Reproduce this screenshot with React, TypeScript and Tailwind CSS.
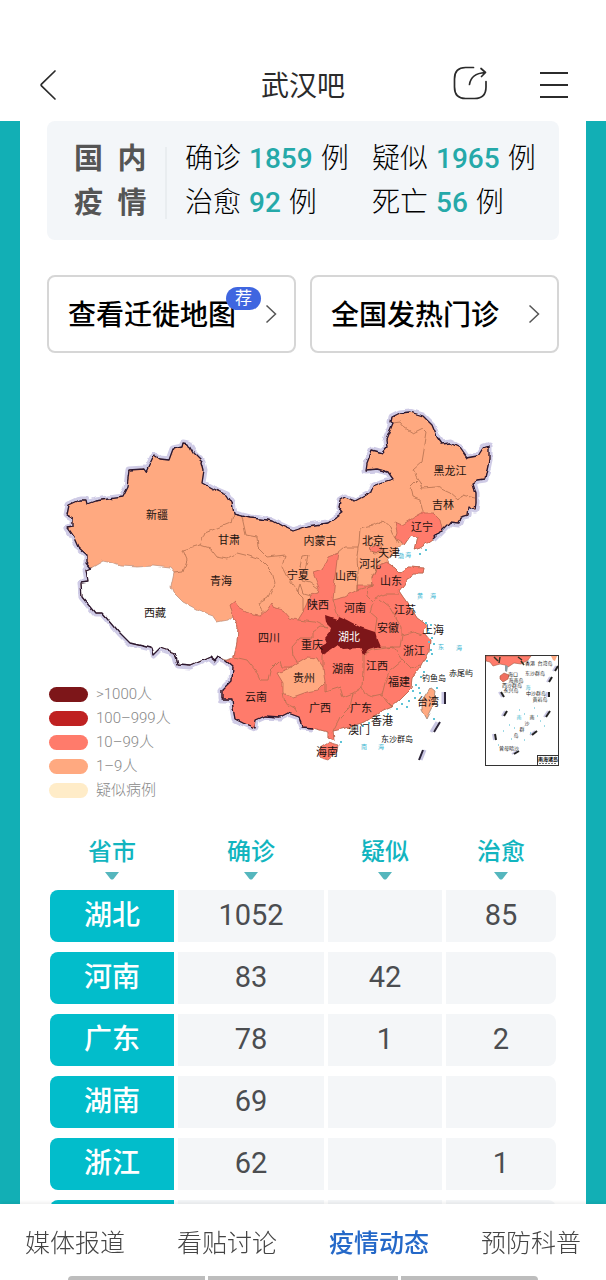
const CASES = [
  { label: '确诊', value: '1859' },
  { label: '疑似', value: '1965' },
  { label: '治愈', value: '92' },
  { label: '死亡', value: '56' },
];

const LEGEND = [
  { label: '>1000人', color: 'bg-[#7d1619]' },
  { label: '100–999人', color: 'bg-[#bf2121]' },
  { label: '10–99人', color: 'bg-[#ff7b6b]' },
  { label: '1–9人', color: 'bg-[#ffa980]' },
  { label: '疑似病例', color: 'bg-[#ffecc8]' },
];

const COLUMNS = ['省市', '确诊', '疑似', '治愈'];

const ROWS = [
  ['湖北', '1052', '', '85'],
  ['河南', '83', '42', ''],
  ['广东', '78', '1', '2'],
  ['湖南', '69', '', ''],
  ['浙江', '62', '', '1'],
  ['', '', '', ''],
];

const TABS = ['媒体报道', '看贴讨论', '疫情动态', '预防科普'];

// Land border, clockwise from the south-west corner of Xinjiang to the Yalu
const NORTH_BORDER =
  'M91 568 87 563 87 555 78 547 74 538 67 528 73 527 73 518 67 515 69 505 80 500 86 500 87 504 95 501 122 497 127 487 129 470 144 469 146 472 154 455 160 459 169 460 173 449 182 447 183 443 188 444 193 453 202 462 204 470 202 483 213 489 227 495 232 503 234 514 250 518 260 519 273 521 282 526 293 531 308 526 328 523 335 518 343 512 339 507 340 500 345 497 355 501 370 493 373 486 383 482 393 479 388 472 377 469 366 470 367 463 372 450 383 453 387 448 386 440 393 423 391 422 392 417 400 413 410 412 423 416 432 425 437 437 442 444 450 443 460 448 467 458 478 456 483 448 489 446 489 460 485 479 478 480 473 483 476 493 476 503 475 510 469 507 468 515 461 517 459 523 450 522 443 529 433 539';

const COAST =
  '420 548 414 550 417 537 412 535 405 545 398 547 395 553 387 560 390 565 395 568 400 573 408 567 424 568 423 573 413 573 405 583 399 591 403 597 411 608 417 618 427 625 423 632 430 640 429 652 424 660 420 668 413 677 412 688 400 700 392 707 380 712 365 722 358 724 350 727 333 731 334 740 328 738 328 732 313 728';

const SOUTH_BORDER =
  '313 728 302 727 299 717 288 713 280 717 265 716 256 720 255 728 243 723 235 719 233 708 232 699 222 699 222 690 232 680 233 667 225 660 218 657 215 661 210 657 190 666 178 665 175 653 160 648 153 655 151 648 130 643 120 633 103 613 95 613 82 597 81 583 88 582 86 570 91 568';

const TIBET =
  'M91 568 103 561 112 563 120 566 137 567 153 566 170 568 174 573 171 587 173 592 183 602 198 610 212 615 217 622 228 620 233 616 238 627 237 643 234 657 226 659 218 657 215 661 210 657 190 666 178 665 175 653 160 648 153 655 151 648 130 643 120 633 103 613 95 613 82 597 81 583 88 582 86 570Z';

const RED_SOUTH =
  'M233 616 230 605 235 601 239 607 253 615 260 616 267 610 272 603 275 608 283 610 290 618 298 620 303 612 307 603 310 595 318 593 319 588 313 573 322 570 328 557 338 553 337 560 335 577 333 600 345 597 357 590 357 585 373 585 372 577 377 567 387 563 395 568 400 573 408 567 424 568 423 573 413 573 405 583 399 591 403 597 411 608 417 618 427 625 423 632 430 640 429 652 424 660 420 668 413 677 412 688 400 700 392 707 380 712 365 722 358 724 350 727 333 731 334 740 328 738 328 732 313 728 302 727 299 717 288 713 280 717 265 716 256 720 255 728 243 723 235 719 233 708 232 699 222 699 222 690 232 680 233 667 225 660 234 657 237 643 238 627Z';

const LIAONING =
  'M395 522 402 525 413 518 422 513 433 513 440 520 442 529 433 539 420 548 414 550 417 537 412 535 405 545 395 538 397 532Z';

const GUIZHOU =
  'M277 673 290 668 297 663 307 657 317 658 323 667 325 683 318 690 307 692 293 697 283 693 283 683 280 678Z';

const HUBEI =
  'M325 616 337 620 338 616 347 620 360 627 375 632 377 640 380 647 370 650 363 655 360 648 343 649 337 645 323 655 318 648 327 643 325 638 330 632 331 627 326 622Z';

const HAINAN = 'M320 747 328 742 338 745 337 752 328 760 318 757Z';
const TAIWAN = 'M430 688 435 692 433 707 427 719 422 710 422 700Z';

const PROVINCE_LINES = [
  'M234 514 232 522 217 528 205 533 200 545 183 550 187 560 183 572 174 573',
  'M200 545 210 548 217 557 228 559 237 553 245 555 260 560 272 572 275 583 268 597 258 603 263 612',
  'M242 517 246 535 257 537 258 547 268 557 285 555 282 567 287 577 298 592 300 584 303 593 310 595',
  'M300 567 302 557 308 556 306 565 302 580 310 582 318 588',
  'M298 592 303 597 303 612',
  'M338 553 345 547 358 547 357 557 358 573 357 590',
  'M359 543 360 528 373 525 383 521 390 527 392 533 398 543',
  'M358 547 359 543',
  'M377 567 372 577 373 585',
  'M366 545 370 537 378 540 382 552 374 553 370 549Z',
  'M393 423 400 422 405 428 413 433 423 428 427 432 424 450 422 462 413 470 417 478 420 482 422 488 437 487 450 493 458 500 462 495 475 498',
  'M417 480 410 487 412 497 420 500 423 512',
  'M234 657 247 660 255 670 260 680 268 680 270 670 280 660 282 667 292 667',
  'M283 693 285 703 293 707 297 713',
  'M298 620 315 622 327 628 320 627 313 632 313 638 300 638 292 647 293 657 297 663',
  'M325 683 325 692 340 687 343 697 353 693 362 687 363 670 363 655',
  'M363 655 373 650 393 647 402 660 390 670 385 683 382 695 373 697 365 693 362 687',
  'M382 695 387 702 392 707',
  'M380 647 393 647 400 647 402 635 413 632 422 635',
  'M402 660 410 668 420 665',
  'M357 590 367 587 368 597 373 602 370 612 377 618 375 632',
  'M373 585 367 587 M373 600 385 594 399 594',
  'M380 600 390 608 397 620 402 628 402 635',
  'M333 600 338 616',
  'M353 693 350 707 340 717 333 731',
  'M323 655 323 667',
];

const PLACES: [string, number, number][] = [
  ['新疆', 157, 515],
  ['甘肃', 229, 540],
  ['青海', 221, 581],
  ['西藏', 155, 613],
  ['内蒙古', 320, 541],
  ['宁夏', 298, 575],
  ['黑龙江', 450, 471],
  ['吉林', 443, 505],
  ['辽宁', 422, 527],
  ['北京', 373, 541],
  ['天津', 389, 553],
  ['河北', 370, 564],
  ['山西', 346, 576],
  ['山东', 391, 581],
  ['陕西', 318, 605],
  ['河南', 355, 608],
  ['江苏', 405, 610],
  ['安徽', 388, 628],
  ['上海', 433, 630],
  ['四川', 269, 638],
  ['重庆', 312, 645],
  ['浙江', 414, 651],
  ['湖南', 343, 669],
  ['江西', 377, 666],
  ['福建', 399, 682],
  ['贵州', 304, 678],
  ['云南', 256, 697],
  ['广西', 320, 708],
  ['广东', 361, 708],
  ['香港', 382, 721],
  ['澳门', 359, 730],
  ['海南', 327, 752],
  ['台湾', 428, 702],
];

const ISLANDS: [string, number, number][] = [
  ['钓鱼岛', 434, 678],
  ['赤尾屿', 461, 673],
  ['东沙群岛', 397, 739],
];

const SEAS: [string, number, number][] = [
  ['渤', 401, 556],
  ['海', 408, 555],
  ['黄', 420, 596],
  ['海', 433, 596],
  ['东', 441, 647],
  ['海', 459, 648],
  ['南', 364, 747],
  ['海', 381, 747],
];

const SEA_DOTS: [number, number][] = [
  [419, 553], [425, 549], [430, 624], [428, 632], [431, 637], [433, 643], [430, 649], [426, 660], [423, 671],
  [420, 676], [415, 684], [419, 692], [414, 697], [408, 700], [401, 703], [396, 708], [362, 725], [368, 722],
  [374, 718], [387, 713], [340, 741], [436, 687], [433, 718], [427, 629], [425, 622], [428, 641], [431, 653],
  [412, 690], [406, 706], [418, 687],
];

const INSET_LABELS: [string, number, number][] = [
  ['香港', 530, 663],
  ['台湾岛', 545, 663],
  ['东沙群岛', 535, 673],
  ['海口', 513, 674],
  ['海南岛', 516, 680],
  ['西沙群岛', 512, 685],
  ['永兴岛', 511, 690],
  ['中沙群岛', 536, 693],
  ['黄岩岛', 540, 699],
  ['南', 532, 717],
  ['沙', 527, 723],
  ['群', 522, 729],
  ['岛', 516, 735],
  ['曾母暗沙', 509, 748],
];

// Nine-dash segments inside the inset: x1, y1, x2, y2
const INSET_DASHES: [number, number, number, number][] = [
  [558, 666, 555, 671],
  [552, 677, 549, 682],
  [549, 692, 549, 697],
  [550, 711, 546, 717],
  [537, 731, 532, 735],
  [514, 754, 519, 751],
  [495, 734, 496, 740],
  [507, 711, 504, 716],
  [501, 692, 504, 697],
];

function InsetMap() {
  return (
    <g>
      <rect x="485.500" y="655.500" width="73" height="110" fill="#fff" stroke="#333" />
      <path d="M486 656H531L528 660 521 664 514 663 508 667 505 665 500 664 493 666 490 662 486 661Z" fill="#ff7b6b" stroke="#a5593f" strokeWidth="0.6" />
      <path d="M551 656H557L555 661 553 660Z" fill="#ffa980" />
      <path d="M505 665 508 666 507 672 505 671Z" fill="#8a9da3" />
      <path d="M500 676 504 673 509 675 508 679 503 682 500 679Z" fill="#f0705f" stroke="#a5593f" strokeWidth="0.6" />
      <path d="M494 657 498 661M500 657 499 663M521 661 524 665M518 657 522 660" stroke="#332" strokeWidth="1.500" />
      {INSET_DASHES.map(([x1, y1, x2, y2]) => (
        <g key={`${x1}-${y1}`} strokeWidth="2">
          <path d={`M${x1 - 2} ${y1}L${x2 - 2} ${y2}`} stroke="#c9c6e2" />
          <path d={`M${x1} ${y1}L${x2} ${y2}`} stroke="#222" />
        </g>
      ))}
      <g fontSize="5" fill="#222" textAnchor="middle">
        {INSET_LABELS.map(([name, x, y]) => (
          <text key={name + y} x={x} y={y + 2}>
            {name}
          </text>
        ))}
        <text x="519" y="719" fill="#3cb4cc">南</text>
        <text x="528" y="689" fill="#3cb4cc">海</text>
      </g>
      <path
        d="M509 725h1M514 728h1M519 710h1M524 714h1M537 716h1M540 721h1M544 726h1M530 733h1M503 731h1M511 739h1M524 740h1M534 708h1M498 745h1"
        stroke="#3cb4cc"
      />
      <rect x="537.500" y="755.500" width="21" height="10" fill="#fff" stroke="#333" />
      <text x="548" y="761" fontSize="5" fontWeight="700" textAnchor="middle">南海诸岛</text>
      <path d="M539 763.500h18" stroke="#777" strokeDasharray="2 1" />
    </g>
  );
}

function ChinaMap() {
  return (
    <svg viewBox="47 400 512 410" className="block w-full" role="img" aria-label="全国疫情分布图">
      <defs>
        <filter id="rough" x="-5%" y="-5%" width="110%" height="110%" colorInterpolationFilters="sRGB">
          <feTurbulence type="fractalNoise" baseFrequency="0.13" numOctaves="1" seed="4" result="noise" />
          <feDisplacementMap in="SourceGraphic" in2="noise" scale="5" xChannelSelector="R" yChannelSelector="G" />
        </filter>
      </defs>
      <g filter="url(#rough)" strokeLinejoin="round">
        <g fill="none" stroke="#cfcbe6" strokeWidth="7">
          <path d={NORTH_BORDER} />
          <path d={`M${SOUTH_BORDER}`} />
        </g>
        <path d={`${NORTH_BORDER} ${COAST} ${SOUTH_BORDER}Z`} fill="#ffa980" stroke="#b87f63" strokeWidth="0.7" />
        <path d={TIBET} fill="#fff" stroke="#b98d78" strokeWidth="0.7" />
        <g fill="#ff7b6b" stroke="#b3614c" strokeWidth="0.7">
          <path d={RED_SOUTH} />
          <path d={LIAONING} />
          <path d={HAINAN} />
          <path d="M370 547 376 545 381 549 378 553 371 551Z" />
        </g>
        <path d={TAIWAN} fill="#ffa980" stroke="#8f7767" strokeWidth="0.7" />
        <path d={GUIZHOU} fill="#ffa980" stroke="#b3614c" strokeWidth="0.7" />
        <g fill="none" stroke="#b3704f" strokeWidth="0.8">
          {PROVINCE_LINES.map((d) => (
            <path key={d} d={d} />
          ))}
        </g>
        <path d={HUBEI} fill="#7d1619" />
        <g fill="none" stroke="#2c1830" strokeWidth="1.300">
          <path d={NORTH_BORDER} />
          <path d={`M${SOUTH_BORDER}`} />
        </g>
      </g>

      <g fill="#5fc3d6">
        {SEA_DOTS.map(([x, y]) => (
          <rect key={`${x}-${y}`} x={x} y={y} width="2" height="2" />
        ))}
      </g>

      <g strokeWidth="2">
        <path d="M443 692V704M437 722 431 732M425 750 421 760" stroke="#c9c6e2" strokeWidth="3" />
        <path d="M445 692V704M440 722 434 732M423 750 419 760" stroke="#2b2438" />
      </g>

      <g textAnchor="middle">
        <g fontSize="6" fill="#35b3cf">
          {SEAS.map(([name, x, y]) => (
            <text key={`${x}-${y}`} x={x} y={y + 2}>
              {name}
            </text>
          ))}
        </g>
        <g fontSize="11" fill="#1d1310">
          {PLACES.map(([name, x, y]) => (
            <text key={name} x={x} y={y + 4}>
              {name}
            </text>
          ))}
        </g>
        <text x="349" y="641" fontSize="11" fill="#fff">湖北</text>
        <g fontSize="8" fill="#111">
          {ISLANDS.map(([name, x, y]) => (
            <text key={name} x={x} y={y + 3}>
              {name}
            </text>
          ))}
        </g>
      </g>
      <InsetMap />
    </svg>
  );
}

function TopBar() {
  return (
    <header className="grid h-[121px] shrink-0 grid-cols-[1fr_auto_1fr] items-center bg-white px-[38px] pt-12 text-[#2b2b2b]">
      <button type="button" aria-label="返回" className="w-6">
        <svg viewBox="0 0 24 32" className="h-8 w-6" fill="none" stroke="currentColor" strokeWidth="1.700" strokeLinecap="round" strokeLinejoin="round">
          <path d="M17 2 3.500 15.200q-.8.800 0 1.600L17 30" />
        </svg>
      </button>
      <h1 className="pt-1 text-[28px] leading-8">武汉吧</h1>
      <div className="flex items-center justify-end gap-[53px]">
        <button type="button" aria-label="分享" className="pb-1">
          <svg viewBox="0 0 34 34" className="h-[34px] w-[34px]" fill="none" stroke="currentColor" strokeWidth="1.700" strokeLinecap="round">
            <path d="M20.500 1.500H12.500Q1.500 1.500 1.500 13V21Q1.500 32.500 12.500 32.500H21.500Q33 32.500 33 21V15.500" />
            <path d="M16.500 18.500Q18 7.500 32 6.500M28 2.500 32.500 6.500 28.500 10.500" strokeLinejoin="round" />
          </svg>
        </button>
        <button type="button" aria-label="菜单" className="flex w-7 flex-col gap-[10px] py-1">
          <span className="h-[2px] w-full bg-current" />
          <span className="h-[2px] w-full bg-current" />
          <span className="h-[2px] w-full bg-current" />
        </button>
      </div>
    </header>
  );
}

function Summary() {
  return (
    <section className="flex h-[119px] rounded-lg bg-[#f3f6f9] pt-4 pl-[27px]">
      <h2 className="grid w-[73px] grid-cols-2 content-start gap-x-[14px] text-[29px] leading-[44px] font-bold text-[#555]">
        <span>国</span>
        <span>内</span>
        <span>疫</span>
        <span>情</span>
      </h2>
      <div className="mt-[10px] ml-[18px] h-[72px] w-[2px] bg-[#e9edf0]" />
      <dl className="ml-[18px] grid flex-1 grid-cols-2 content-start text-[28px] leading-[44px] font-light text-black">
        {CASES.map(({ label, value }) => (
          <div key={label} className="flex gap-2 whitespace-nowrap">
            <dt>{label}</dt>
            <dd className="flex gap-2">
              <span className="font-medium text-[#25a9a9]">{value}</span>例
            </dd>
          </div>
        ))}
      </dl>
    </section>
  );
}

function LinkCard({ label, badge }: { label: string; badge?: string }) {
  return (
    <a href="#" className="relative flex h-[78px] items-center justify-between rounded-lg border-2 border-[#d6d6d6] pr-[17px] pl-[19px] text-black">
      <span className="pt-1 text-[28px] leading-8 font-medium whitespace-nowrap">{label}</span>
      <svg viewBox="0 0 12 20" className="h-5 w-3" fill="none" stroke="#555" strokeWidth="1.500" aria-hidden="true">
        <path d="M1.500 1.500 10.500 10 1.500 18.500" />
      </svg>
      {badge && (
        <span className="absolute top-[10px] right-[33px] rounded-full bg-[#3f66e0] px-[9px] text-[17px] leading-[23px] text-white">{badge}</span>
      )}
    </a>
  );
}

function CaseTable() {
  return (
    <table className="mt-7 ml-[3px] block pr-[3px]">
      <thead className="block">
        <tr className="grid grid-cols-[124fr_146fr_114fr_110fr] gap-1">
          {COLUMNS.map((name) => (
            <th key={name} scope="col" className="flex h-[52px] flex-col items-center text-2xl leading-7 font-medium text-[#12b5bf]">
              {name}
              <svg viewBox="0 0 14 8" className="mt-[6px] h-2 w-[14px]" aria-hidden="true">
                <path d="M0 0H14L8.500 7Q7 8 5.500 7Z" fill="#55b6bd" />
              </svg>
            </th>
          ))}
        </tr>
      </thead>
      <tbody className="flex flex-col gap-[10px]">
        {ROWS.map(([province, ...counts]) => (
          <tr key={province} className="grid h-[52px] grid-cols-[124fr_146fr_114fr_110fr] gap-1 text-center text-[28px] leading-[52px]">
            <th scope="row" className="rounded-l-lg bg-[#02bdcb] font-medium text-white">
              {province}
            </th>
            {counts.map((count, index) => (
              <td key={index} className="bg-[#f4f6f8] text-[29px] leading-[50px] text-[#4b4d50] last:rounded-r-lg">
                {count}
              </td>
            ))}
          </tr>
        ))}
      </tbody>
    </table>
  );
}

function TabBar() {
  return (
    <nav className="relative flex h-[76px] shrink-0 flex-col justify-between bg-white shadow-[0_-2px_3px_rgba(0,0,0,0.06)]">
      <div className="flex justify-between px-[25px] pt-6 text-[25px] leading-8 font-light text-[#444]">
        {TABS.map((tab) => (
          <a key={tab} href="#" className={tab === '疫情动态' ? 'font-medium text-[#2468c8]' : ''}>
            {tab}
          </a>
        ))}
      </div>
      <div className="mx-[68px] grid grid-cols-[137fr_190fr_137fr] gap-[3px]">
        <span className="h-1 rounded-tl-sm bg-[#bdbdbd]" />
        <span className="h-1 bg-[#bdbdbd]" />
        <span className="h-1 rounded-tr-sm bg-[#bdbdbd]" />
      </div>
    </nav>
  );
}

export default function App() {
  return (
    <div className="flex h-screen flex-col bg-white font-[Roboto,'Noto_Sans_CJK_SC',sans-serif]">
      <TopBar />
      <main className="min-h-0 flex-1 overflow-y-auto bg-[#12afb5] px-5 [scrollbar-width:none]">
        <div className="bg-white px-[27px] pb-8">
          <Summary />
          <div className="mt-[35px] grid grid-cols-2 gap-[14px]">
            <LinkCard label="查看迁徙地图" badge="荐" />
            <LinkCard label="全国发热门诊" />
          </div>
          <section className="relative mt-[47px]">
            <ChinaMap />
            <ul className="absolute bottom-2 left-[2px] text-[15px] leading-6 font-light text-[#888]">
              {LEGEND.map(({ label, color }) => (
                <li key={label} className="flex items-center gap-2">
                  <span className={`h-[15px] w-[39px] rounded-full ${color}`} />
                  {label}
                </li>
              ))}
            </ul>
          </section>
          <CaseTable />
        </div>
      </main>
      <TabBar />
    </div>
  );
}
